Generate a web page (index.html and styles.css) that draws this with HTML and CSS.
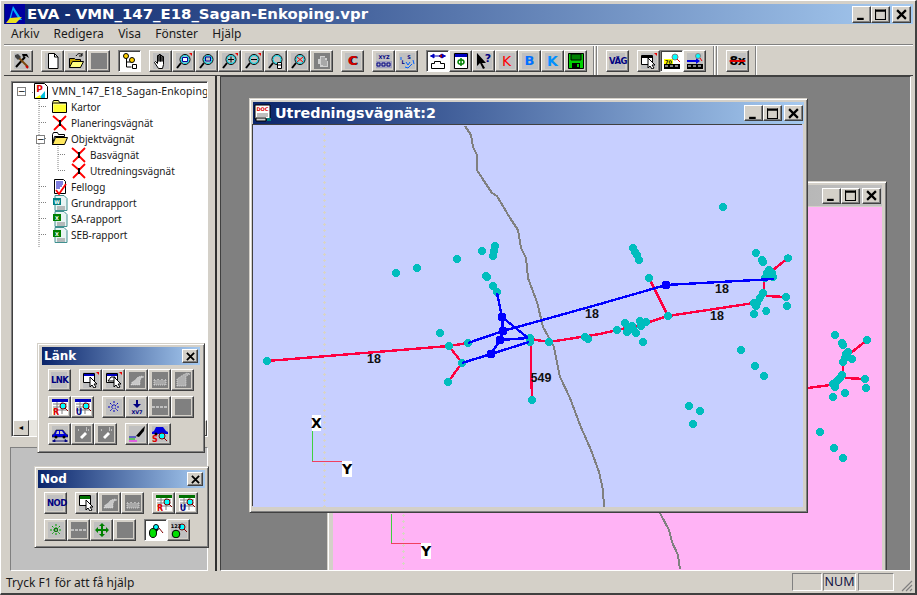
FILE: index.html
```html
<!DOCTYPE html>
<html lang="sv">
<head>
<meta charset="utf-8">
<title>EVA</title>
<link rel="stylesheet" href="styles.css">
</head>
<body>
<svg class="defs" aria-hidden="true">
  <symbol id="tools" viewBox="0 0 16 16"><path d="M2 14 11 4" stroke="#000" stroke-width="2"/><path d="M14 14 5 5" stroke="#7a4a10" stroke-width="2"/><path d="M8 1h5l2 4-3-2-3 1z" fill="#000"/><path d="M1 2l3-1 3 3-3 3-3-3z" fill="#404040"/><path d="M12 13l2 2" stroke="#c00" stroke-width="2"/></symbol>
  <symbol id="new" viewBox="0 0 16 16"><path d="M3.500 .5h6l3.500 3.500v11.500h-9.500z" fill="#fff" stroke="#000"/><path d="M9.500 .5v3.500h3.500" fill="none" stroke="#000"/></symbol>
  <symbol id="open" viewBox="0 0 16 16"><path d="M1.500 5.500h5l1 1h5v8h-11z" fill="#c0a000" stroke="#000"/><path d="M1.500 14.500l3-6h11l-3 6z" fill="#ffff80" stroke="#000"/><path d="M8 3c2-3 4-3 6-1M14 0v3h-3" fill="none" stroke="#000"/></symbol>
  <symbol id="treei" viewBox="0 0 16 16"><path d="M4.500 4v10h5M4.500 9h5" fill="none" stroke="#000"/><circle cx="4" cy="3" r="2.500" fill="#ffd000" stroke="#000"/><circle cx="10" cy="7" r="2.500" fill="#ffd000" stroke="#000"/><path d="M10.500 11.500h4v4h-4z" fill="#fff" stroke="#000"/></symbol>
  <symbol id="hand" viewBox="0 0 16 16"><path d="M5.500 15.500l-4-6 1-1 2 2v-8h1.500v6-7h1.500v7-6h1.500v6-5h1.500v8l-1 4z" fill="#fff" stroke="#000" stroke-linejoin="round"/></symbol>
  <symbol id="mag" viewBox="0 0 16 16"><path d="M1 15l4-5" stroke="#000" stroke-width="2"/><circle cx="9" cy="6.500" r="5" fill="#c0c0c0" stroke="#000"/><circle cx="9" cy="6.500" r="4" fill="none" stroke="#00d8e8"/></symbol>
  <symbol id="magw" viewBox="0 0 16 16"><use href="#mag"/><path d="M6.500 4.500h5v4h-5z" fill="#fff" stroke="#0000a0"/><path d="M13 0h3v3z" fill="#e00"/></symbol>
  <symbol id="magr" viewBox="0 0 16 16"><use href="#mag"/><path d="M6.500 4h5v4h-5z" fill="none" stroke="#0000a0"/></symbol>
  <symbol id="magp" viewBox="0 0 16 16"><use href="#mag"/><path d="M6 6.500h6M9 3.500v6" stroke="#000"/><path d="M13 0h3v3z" fill="#e00"/></symbol>
  <symbol id="magm" viewBox="0 0 16 16"><use href="#mag"/><path d="M6 6.500h6" stroke="#000"/><path d="M13 0h3v3z" fill="#e00"/></symbol>
  <symbol id="magc" viewBox="0 0 16 16"><use href="#mag"/><path d="M9.500 9.500h4v6h-4z" fill="#fff" stroke="#000"/><path d="M9.500 12h4" stroke="#000"/></symbol>
  <symbol id="magx" viewBox="0 0 16 16"><use href="#mag"/><path d="M6 4l6 5M12 4l-6 5" stroke="#e00"/></symbol>
  <symbol id="magd" viewBox="0 0 16 16"><rect width="16" height="16" fill="#808080"/><path d="M6 3h5v2h2v3h1v6h-8v-3h-2v-5h2z" fill="#d0d0d0"/><path d="M8 4v8M10 4v9M12 7v6" stroke="#808080"/></symbol>
  <symbol id="xyz" viewBox="0 0 16 16"><path d="M0 8h16v7H0z" fill="#a0a0c0"/><path d="M1 10h3v3H1zM6 10h3v3H6zM11 10h3v3h-3z" fill="#c0c0c0" stroke="#000080"/></symbol>
  <symbol id="lks" viewBox="0 0 16 16"><path d="M2 4v3M6 14l3 1 4-4M14 7l1 4" stroke="#0060ff" fill="none"/><path d="M7 9l2 3 2-3" fill="none" stroke="#0060ff"/></symbol>
  <symbol id="links" viewBox="0 0 16 16"><path d="M0 3h16M1 3l3-2v4zM15 3l-3-2v4zM9 3l3-2v4z" stroke="#0000c0" fill="#0000c0"/><path d="M9 3l3-2v4z" fill="#a00000"/><path d="M1.500 15.500v-5h3v-2h6v2h4v5z" fill="#fff" stroke="#000"/></symbol>
  <symbol id="panel" viewBox="0 0 16 16"><path d="M1.500 .5h13v15h-13z" fill="#fff" stroke="#000"/><path d="M2 1h12v3H2z" fill="#0000c0"/><path d="M8 5v8M5 9c0-3 6-3 6 0s-6 3-6 0" fill="none" stroke="#008000" stroke-width="1.500"/></symbol>
  <symbol id="helpi" viewBox="0 0 16 16"><path d="M1 0v13l3-3 3 6 2-1-3-5h4z" fill="#000"/></symbol>
  <symbol id="save" viewBox="0 0 16 16"><path d="M.5.500h15v15H.500z" fill="#00d000" stroke="#000"/><path d="M3 1h10v6H3z" fill="#008000" stroke="#000"/><path d="M4 10h8v5H4z" fill="#000"/><path d="M9 11h2v3H9z" fill="#00d000"/></symbol>
  <symbol id="wincur" viewBox="0 0 16 16"><path d="M.5 2.500h11v9H.500z" fill="#fff" stroke="#000"/><path d="M1 3h10v2H1z" fill="#000"/><path d="M7 5v10l2-2 2 3 2-1-2-3h3z" fill="#fff" stroke="#000"/><path d="M13 0h3v3z" fill="#e00"/></symbol>
  <symbol id="road70" viewBox="0 0 16 16"><path d="M0 6h9v5H0z" fill="#ffff00"/><path d="M0 11h16v5H0z" fill="#000"/><path d="M1 13h3M6 13h3M11 13h3" stroke="#fff"/><circle cx="11" cy="4" r="3" fill="#00ffff" stroke="#808080"/><path d="M13 6l3 3" stroke="#e00"/></symbol>
  <symbol id="roadar" viewBox="0 0 16 16"><path d="M0 11h16v5H0z" fill="#000"/><path d="M1 13h3M6 13h3M11 13h3" stroke="#fff"/><path d="M0 8h10" stroke="#0000e0" stroke-width="2"/><path d="M9 5l4 3-4 3z" fill="#0000e0"/><circle cx="11" cy="3" r="2.500" fill="#00ffff" stroke="#808080"/><path d="M13 5l2 3" stroke="#e00"/></symbol>
  <symbol id="disa" viewBox="0 0 16 16"><rect width="16" height="16" fill="#808080"/><path d="M2 13l1-3 2-1 2-2 2-2 4-1 2 1-3 1-1 3v4z" fill="#c8c8c8" stroke="#fff" stroke-width=".5" stroke-dasharray="1 1"/></symbol>
  <symbol id="disb" viewBox="0 0 16 16"><rect width="16" height="16" fill="#808080"/><path d="M2 13V7l2 2 2-2 2 2 2-2 2 2 2-2v6z" fill="#a8a8a8" stroke="#fff" stroke-width=".6" stroke-dasharray="1 1"/></symbol>
  <symbol id="disc" viewBox="0 0 16 16"><rect width="16" height="16" fill="#808080"/><path d="M2 14V7l3-2 3-2 4-2 3 1-4 2v10z" fill="#b0b0b0" stroke="#fff" stroke-width=".6" stroke-dasharray="1 1"/></symbol>
  <symbol id="dash" viewBox="0 0 16 16"><rect width="16" height="16" fill="#808080"/><path d="M0 8h16" stroke="#fff" stroke-dasharray="3 1"/></symbol>
  <symbol id="gray" viewBox="0 0 16 16"><rect width="16" height="16" fill="#808080"/></symbol>
  <symbol id="winc" viewBox="0 0 16 16"><path d="M.5 1.500h11v9H.500z" fill="#fff" stroke="#000"/><path d="M1 2h10v2H1z" fill="#0000c0"/><path d="M7 5v10l2-2 2 3 2-1-2-3h3z" fill="#fff" stroke="#000"/><path d="M13 0h3v3z" fill="#e00"/></symbol>
  <symbol id="wina" viewBox="0 0 16 16"><path d="M.5 1.500h11v9H.500z" fill="#fff" stroke="#000"/><path d="M1 2h10v2H1z" fill="#0000c0"/><path d="M2 9l3-4h4v4z" fill="none" stroke="#000"/><path d="M8 5v10l2-2 2 3 2-1-2-3h3z" fill="#fff" stroke="#000"/><path d="M13 0h3v3z" fill="#e00"/></symbol>
  <symbol id="wing" viewBox="0 0 16 16"><path d="M.5 .5h11v10H.500z" fill="#fff" stroke="#000"/><path d="M1 1h10v3H1z" fill="#007000"/><path d="M7 5v10l2-2 2 3 2-1-2-3h3z" fill="#fff" stroke="#000"/></symbol>
  <symbol id="tabb" viewBox="0 0 16 16"><path d="M0 0h16v16H0z" fill="#fff"/><path d="M0 0h16v3H0z" fill="#0000c0"/><path d="M1 5h14M1 8h14M1 11h14M5 3v12M10 3v12" stroke="#808080"/><circle cx="11" cy="7" r="3" fill="#00ffff" stroke="#800000"/><path d="M13 9l3 3" stroke="#800000"/></symbol>
  <symbol id="tabg" viewBox="0 0 16 16"><path d="M0 0h16v16H0z" fill="#fff"/><path d="M0 0h16v3H0z" fill="#007000"/><path d="M1 5h14M1 8h14M1 11h14M5 3v12M10 3v12" stroke="#808080"/><circle cx="11" cy="7" r="3" fill="#00ffff" stroke="#800000"/><path d="M13 9l3 3" stroke="#800000"/></symbol>
  <symbol id="star" viewBox="0 0 16 16"><path d="M8 2v12M2 8h12M4 4l8 8M12 4l-8 8" stroke="#0000c0" stroke-dasharray="2 1"/><circle cx="8" cy="8" r="1.500" fill="#c0c0c0"/></symbol>
  <symbol id="starg" viewBox="0 0 16 16"><path d="M8 2v12M2 8h12M4 4l8 8M12 4l-8 8" stroke="#00a000" stroke-dasharray="2 1"/><circle cx="8" cy="8" r="1.500" fill="#c0c0c0" stroke="#006000"/></symbol>
  <symbol id="xv7" viewBox="0 0 16 16"><path d="M7 1h2v4h3l-4 4-4-4h3z" fill="#000080"/></symbol>
  <symbol id="car" viewBox="0 0 16 16"><path d="M0 9l2-1 2-4h7l3 4 2 1v2H0z" fill="#0000e0" stroke="#000" stroke-width=".5"/><path d="M5 5h2v3H4zM8 5h2l2 3H8z" fill="#c0c0c0"/><circle cx="4" cy="11" r="1.500"/><circle cx="12" cy="11" r="1.500"/><path d="M0 15h16M1 15l2-1.500v3zM15 15l-2-1.500v3z" stroke="#000080" fill="#000080" stroke-width=".8"/></symbol>
  <symbol id="dis2" viewBox="0 0 16 16"><rect width="16" height="16" fill="#808080"/><path d="M5 11l5-5 2 2-5 5z" fill="#fff"/><path d="M3 4h2M11 2h2M11 4h3" stroke="#fff" stroke-dasharray="1 1"/></symbol>
  <symbol id="pen" viewBox="0 0 16 16"><path d="M7 10L13 3l3-3-1 5-5 6z" fill="#000"/><path d="M0 11h7" stroke="#0000c0"/><path d="M0 13h6" stroke="#00c000"/><path d="M0 15h8" stroke="#ff00ff"/></symbol>
  <symbol id="carq" viewBox="0 0 16 16"><path d="M0 6l2-1 2-4h7l3 4 2 1v2H0z" fill="#0000e0"/><circle cx="4" cy="8" r="1.500"/><circle cx="10" cy="10" r="3" fill="#00ffff" stroke="#800000"/><path d="M12 12l3 3" stroke="#800000"/></symbol>
  <symbol id="move" viewBox="0 0 16 16"><path d="M8 1l3 3H9v3h3V5l3 3-3 3V9H9v3h2l-3 3-3-3h2V9H4v2L1 8l3-3v2h3V4H5z" fill="#008000"/></symbol>
  <symbol id="ovals" viewBox="0 0 16 16"><rect width="16" height="16" fill="#fff"/><path d="M2 12l6-7 3 2-6 7z" fill="#000"/><ellipse cx="5" cy="11" rx="3.500" ry="4.500" fill="#00e000" stroke="#000"/><circle cx="8" cy="5" r="2.500" fill="#00ffff" stroke="#000"/><path d="M11 6l4 5" stroke="#800000"/></symbol>
  <symbol id="num123" viewBox="0 0 16 16"><circle cx="5" cy="12" r="3.800" fill="#00e000" stroke="#000"/><circle cx="11" cy="5" r="3" fill="#00ffff" stroke="#800000"/><path d="M13 7l3 3" stroke="#800000"/></symbol>
  <symbol id="proj" viewBox="0 0 16 16"><path d="M1.500 .5h10l3 3v12h-13z" fill="#fff" stroke="#000"/><path d="M6 15l6-7v7z" fill="#00c0e0"/><path d="M2 15l5-3 1 3z" fill="#ffff00"/></symbol>
  <symbol id="fclosed" viewBox="0 0 16 16"><path d="M.5 3.500l1-2h5l1 2h7v10H.500z" fill="#ffff80" stroke="#000"/><path d="M1 4h13" stroke="#000"/><path d="M2 6h12v7H2z" fill="#ffff00" opacity=".6"/></symbol>
  <symbol id="fopen" viewBox="0 0 16 16"><path d="M.5 3.500l1-2h4l1 2h6v2h-10l-2 8z" fill="#fff" stroke="#000"/><path d="M.5 13.500l3-7h12l-3 7z" fill="#ffe860" stroke="#000"/></symbol>
  <symbol id="redx" viewBox="0 0 16 16"><path d="M1 1l7 6M14 1L8 7M8 9l-6 6M8 9l6 6" fill="none" stroke="#f00" stroke-width="1.800"/><path d="M8 5v6" stroke="#000" stroke-width="2"/></symbol>
  <symbol id="flog" viewBox="0 0 16 16"><path d="M2.500 .5h9l2 2v12h-11z" fill="#fff" stroke="#000"/><path d="M4 3h7M4 5h7M4 7h6M4 9h4" stroke="#0000c0"/><path d="M4 11l3 4 7-10" fill="none" stroke="#f00" stroke-width="1.800"/></symbol>
  <symbol id="doc1" viewBox="0 0 16 16"><path d="M3 .5h9l3 3v12H3z" fill="#e8f4f4" stroke="#409090"/><path d="M1 3h8v7H1z" fill="#008080"/><path d="M5 12h8M5 14h8" stroke="#808080"/></symbol>
  <symbol id="doc2" viewBox="0 0 16 16"><path d="M3 .5h9l3 3v12H3z" fill="#e8f4f4" stroke="#409090"/><path d="M1 3h8v7H1z" fill="#008000"/><path d="M5 12h8M5 14h8" stroke="#808080"/></symbol>
  <symbol id="logo" viewBox="0 0 20 20"><rect width="20" height="20" fill="#0000a0"/><path d="M8 2l9 14H4z" fill="#00b0ff"/><path d="M8 6l5 8H6z" fill="#0000c0"/><path d="M1 19l4-5 12-1-6 6z" fill="#e8e020"/></symbol>
  <symbol id="docw" viewBox="0 0 18 18"><path d="M1 1h15v14H1z" fill="#fff" stroke="#000"/><path d="M3 10h11M3 12h11" stroke="#808080"/><path d="M2 14h10v3H2z" fill="#d0d0d0" stroke="#000"/><path d="M13 14h4v3h-4z" fill="#008080"/></symbol>
  <symbol id="min" viewBox="0 0 10 10"><path d="M1 8h6v2H1z"/></symbol>
  <symbol id="max" viewBox="0 0 10 10"><path d="M.5 1.500h9v8h-9zM0 0h10v2H0z" fill="none" stroke="#000"/></symbol>
  <symbol id="cls" viewBox="0 0 10 10"><path d="M1 1l8 8M9 1l-8 8" stroke="#000" stroke-width="2"/></symbol>
</svg>

<div class="app">
  <header class="titlebar">
    <svg class="title-logo"><use href="#logo"/></svg>
    <span class="title-text">EVA - VMN_147_E18_Sagan-Enkoping.vpr</span>
    <span class="ctrls main-ctrls">
      <button class="ctl"><svg><use href="#min"/></svg></button><button class="ctl"><svg><use href="#max"/></svg></button><button class="ctl gap"><svg><use href="#cls"/></svg></button>
    </span>
  </header>
  <nav class="menubar"><span>Arkiv</span><span>Redigera</span><span>Visa</span><span>Fönster</span><span>Hjälp</span></nav>
  <div class="toolbar">
    <button class="b"><svg><use href="#tools"/></svg></button>
    <i class="s"></i>
    <button class="b"><svg><use href="#new"/></svg></button><button class="b"><svg><use href="#open"/></svg></button><button class="b"><svg><use href="#gray"/></svg></button>
    <i class="s"></i>
    <button class="b on"><svg><use href="#treei"/></svg></button>
    <i class="s"></i>
    <button class="b"><svg><use href="#hand"/></svg></button><button class="b"><svg><use href="#magw"/></svg></button><button class="b"><svg><use href="#magr"/></svg></button><button class="b"><svg><use href="#magp"/></svg></button><button class="b"><svg><use href="#magm"/></svg></button><button class="b"><svg><use href="#magc"/></svg></button><button class="b"><svg><use href="#magx"/></svg></button><button class="b"><svg><use href="#magd"/></svg></button>
    <i class="s"></i>
    <button class="b"><span class="glyph c">C</span></button>
    <i class="s"></i>
    <button class="b"><svg><use href="#xyz"/><text x="8" y="6" class="nano navy">XYZ</text></svg></button><button class="b"><svg><use href="#lks"/><text x="4" y="11" class="nano navy">L</text><text x="10" y="6" class="nano navy">S</text></svg></button>
    <i class="s"></i>
    <button class="b on"><svg><use href="#links"/></svg></button><button class="b"><svg><use href="#panel"/></svg></button><button class="b"><svg><use href="#helpi"/><text x="12" y="9" class="help navy">?</text></svg></button><button class="b"><span class="glyph kr">K</span></button><button class="b"><span class="glyph kb">B</span></button><button class="b"><span class="glyph kk">K</span></button><button class="b"><svg><use href="#save"/></svg></button>
    <i class="grip g1"></i>
    <button class="b"><span class="glyph vag">VÄG</span></button>
    <i class="s"></i>
    <button class="b"><svg><use href="#wincur"/></svg></button><button class="b on"><svg><use href="#road70"/><text x="4.500" y="10.500" class="nano">70</text></svg></button><button class="b"><svg><use href="#roadar"/></svg></button>
    <i class="grip g2"></i>
    <button class="b"><span class="glyph eight">8x</span></button>
    <i class="grip g3"></i>
  </div>

  <main class="workspace">
    <aside class="sidebar">
      <div class="tree">
        <svg class="tree-lines"><path d="M20 10.500h4M27 14v152M27 24.500h8M27 40.500h8M27 56.500h8M27 104.500h8M27 120.500h8M27 136.500h8M27 152.500h8M46 62v26M46 72.500h8M46 88.500h8" fill="none" stroke="#808080" stroke-dasharray="1 1"/></svg>
        <div class="row r0"><i class="pm">−</i><svg><use href="#proj"/><text x="6.500" y="9" class="tiny red">P</text></svg><span>VMN_147_E18_Sagan-Enkoping</span></div>
        <div class="row r1"><svg><use href="#fclosed"/></svg><span>Kartor</span></div>
        <div class="row r1"><svg><use href="#redx"/></svg><span>Planeringsvägnät</span></div>
        <div class="row r1"><i class="pm">−</i><svg><use href="#fopen"/></svg><span>Objektvägnät</span></div>
        <div class="row r2"><svg><use href="#redx"/></svg><span>Basvägnät</span></div>
        <div class="row r2"><svg><use href="#redx"/></svg><span>Utredningsvägnät</span></div>
        <div class="row r1"><svg><use href="#flog"/></svg><span>Fellogg</span></div>
        <div class="row r1"><svg><use href="#doc1"/><text x="5" y="8.500" class="nano white">W</text></svg><span>Grundrapport</span></div>
        <div class="row r1"><svg><use href="#doc2"/><text x="5" y="8.500" class="nano white">X</text></svg><span>SA-rapport</span></div>
        <div class="row r1"><svg><use href="#doc2"/><text x="5" y="8.500" class="nano white">X</text></svg><span>SEB-rapport</span></div>
        <div class="hscroll"><button class="arrow">◄</button><span class="track"></span><button class="arrow">►</button></div>
      </div>
      <div class="lower"></div>
    </aside>

    <section class="mdi">
      <article class="win win-back">
        <div class="wtitle inactive">
          <span class="ctrls"><button class="ctl"><svg><use href="#min"/></svg></button><button class="ctl"><svg><use href="#max"/></svg></button><button class="ctl gap"><svg><use href="#cls"/></svg></button></span>
        </div>
        <svg class="map pink" viewBox="333 207 549 400">
          <path d="M660 513l9 17 3 12 6 13 2 14" class="road"/>
          <path d="M403 514v55" class="cross-v"/><path d="M403 514v55" class="cross-h"/>
          <path d="M808 388l22-3M845 378l20 1M843 363v12M852 352l15-12M832 388l6-8" class="red"/>
          <path d="M835 335h0M842 343h0M843 345h0M867 340h0M848 352h0M846 354h0M845 358h0M843 362h0M852 359h0M842 375h0M840 378h0M838 380h0M836 382h0M833 384h0M835 387h0M865 379h0M866 388h0M845 393h0M833 397h0M820 432h0M834 448h0M843 458h0" class="dots"/>
          <path d="M391.500 514v29" class="axis-g"/><path d="M391 543.500h30" class="axis-r"/>
          <rect x="421" y="543" width="10" height="16" fill="#fff"/><text x="426" y="556" class="axis-t">Y</text>
        </svg>
      </article>

      <article class="win win-front">
        <div class="wtitle">
          <svg class="doc-ic"><use href="#docw"/><text x="8.500" y="7" class="nano red">DOC</text></svg>
          <span class="wtext">Utredningsvägnät:2</span>
          <span class="ctrls"><button class="ctl"><svg><use href="#min"/></svg></button><button class="ctl"><svg><use href="#max"/></svg></button><button class="ctl gap"><svg><use href="#cls"/></svg></button></span>
        </div>
        <svg class="map blue" viewBox="253 125 550 382">
          <path d="M465 126l6 9 2 12 4 8v15l5 8 10 15 5 3 13 22 8 12 3 18 5 10 2 20 9 24 6 25 11 20 6 30 10 21 10 27 11 25 8 22 4 18 1 17" class="road"/>
          <path d="M324 127v380" class="cross-v"/><path d="M324 127v380" class="cross-h"/>
          <path d="M267 361l182-15 19-3M530 339l19 3 51-8 17-4 23-5 28-9 86-13M449 346l13 17-14 19M531 341v21l1 38M764 278v15M766 296l20 1M773 270l15-12" class="red"/>
          <path d="M649 278l19 38" class="red thin"/>
          <path d="M495 246h0M494 251h0M493 256h0M482 251h0M457 259h0M417 268h0M396 273h0M486 276h0M487 277h0M493 286h0M497 292h0M440 333h0M267 361h0M449 346h0M468 343h0M462 363h0M448 382h0M530 338h0M530 342h0M549 342h0M585 337h0M588 339h0M532 400h0M723 207h0M633 248h0M635 252h0M637 255h0M639 260h0M649 278h0M668 316h0M617 330h0M625 323h0M627 332h0M628 328h0M632 326h0M633 329h0M636 333h0M640 321h0M641 326h0M646 322h0M643 342h0M756 253h0M762 260h0M763 262h0M788 258h0M769 270h0M767 273h0M765 278h0M773 277h0M772 273h0M763 293h0M760 298h0M757 303h0M754 303h0M756 306h0M786 297h0M787 306h0M754 314h0M766 311h0M741 350h0M755 366h0M764 376h0M689 406h0M700 411h0M693 424h0" class="dots"/>
          <path d="M497 293l5 24 1 14M502 317l26 21M468 343l35-12 97-27 66-19 108-6M500 340l28-2M500 340l3-9M462 363l29-9 38-12M491 354l9-14" class="blu"/>
          <path d="M502 317h0M503 331h0M500 340h0M491 354h0M666 285h0" class="bigdots"/>
          <text x="374" y="363" class="lbl">18</text>
          <text x="541" y="382" class="lbl">549</text>
          <text x="592" y="318" class="lbl">18</text>
          <text x="722" y="293" class="lbl">18</text>
          <text x="717" y="320" class="lbl">18</text>
          <path d="M312.500 431v30" class="axis-g"/><path d="M312 461.500h30" class="axis-r"/>
          <rect x="312" y="415" width="9" height="16" fill="#fff"/><text x="316.500" y="428" class="axis-t">X</text>
          <rect x="342" y="461" width="10" height="16" fill="#fff"/><text x="347" y="474" class="axis-t">Y</text>
        </svg>
      </article>
    </section>

    <div class="palette p-lank">
      <div class="ptitle"><span>Länk</span><button class="ctl small"><svg><use href="#cls"/></svg></button></div>
      <div class="prow first">
        <button class="b"><span class="glyph lnk">LNK</span></button><i class="s"></i><button class="b"><svg><use href="#winc"/></svg></button><button class="b"><svg><use href="#wina"/></svg></button><button class="b"><svg><use href="#disa"/></svg></button><button class="b"><svg><use href="#disb"/></svg></button><button class="b"><svg><use href="#disc"/></svg></button>
      </div>
      <div class="prow">
        <button class="b"><svg><use href="#tabb"/><text x="4" y="15.500" class="micro red">R</text></svg></button><button class="b"><svg><use href="#tabb"/><text x="4" y="15.500" class="micro navy">U</text></svg></button><i class="s"></i><button class="b"><svg><use href="#star"/></svg></button><button class="b"><svg><use href="#xv7"/><text x="8" y="15" class="nano navy">XV7</text></svg></button><button class="b"><svg><use href="#dash"/></svg></button><button class="b"><svg><use href="#gray"/></svg></button>
      </div>
      <div class="prow">
        <button class="b"><svg><use href="#car"/></svg></button><button class="b"><svg><use href="#dis2"/></svg></button><button class="b"><svg><use href="#dis2"/></svg></button><i class="s"></i><button class="b"><svg><use href="#pen"/></svg></button><button class="b"><svg><use href="#carq"/><text x="3" y="15.500" class="micro red">S</text></svg></button>
      </div>
    </div>

    <div class="palette p-nod">
      <div class="ptitle"><span>Nod</span><button class="ctl small"><svg><use href="#cls"/></svg></button></div>
      <div class="prow first">
        <button class="b"><span class="glyph lnk">NOD</span></button><i class="s"></i><button class="b"><svg><use href="#wing"/></svg></button><button class="b"><svg><use href="#disa"/></svg></button><button class="b"><svg><use href="#disb"/></svg></button><i class="s"></i><button class="b"><svg><use href="#tabg"/><text x="4" y="15.500" class="micro red">R</text></svg></button><button class="b"><svg><use href="#tabg"/><text x="4" y="15.500" class="micro navy">U</text></svg></button>
      </div>
      <div class="prow">
        <button class="b"><svg><use href="#starg"/></svg></button><button class="b"><svg><use href="#dash"/></svg></button><button class="b"><svg><use href="#move"/></svg></button><button class="b"><svg><use href="#gray"/></svg></button><i class="s"></i><button class="b on"><svg><use href="#ovals"/></svg></button><button class="b"><svg><use href="#num123"/><text x="5" y="6" class="nano">123</text></svg></button>
      </div>
    </div>
  </main>

  <footer class="statusbar">
    <span class="msg">Tryck F1 för att få hjälp</span>
    <span class="pane p1"></span><span class="pane p2">NUM</span><span class="pane p3"></span>
    <svg class="sizegrip" viewBox="0 0 12 12"><path d="M11 1L1 11M11 5l-6 6M11 9l-2 2" stroke="#808080" stroke-width="1.200"/></svg>
  </footer>
</div>
</body>
</html>
```

FILE: styles.css
```css
* { box-sizing: border-box; }
html, body { margin: 0; padding: 0; width: 917px; height: 595px; overflow: hidden; background: #d4d0c8; }
body { font-family: "Noto Sans", "Liberation Sans", sans-serif; color: #000; }
.defs { position: absolute; width: 0; height: 0; }
button { padding: 0; margin: 0; font: inherit; }

.nano { font: bold 5px "DejaVu Sans", sans-serif; text-anchor: middle; }
.micro { font: bold 8px "DejaVu Sans", sans-serif; text-anchor: middle; }
.tiny { font: bold 9px "DejaVu Sans", sans-serif; text-anchor: middle; }
.help { font: bold 11px "DejaVu Sans", sans-serif; text-anchor: middle; }
.navy { fill: #000080; }
.red { fill: #e00000; }
.white { fill: #fff; }

.app {
  width: 917px; height: 595px; display: flex; flex-direction: column; position: relative;
  border-style: solid; border-width: 1px 2px 2px 1px;
  border-color: #fff #404040 #404040 #fff;
  padding: 3px 2px 0 3px;
}

.titlebar {
  height: 20px; flex: none; display: flex; align-items: center; padding-left: 1px;
  background: linear-gradient(90deg, #0a246a, #a6caf0);
}
.title-logo { width: 20px; height: 20px; flex: none; }
.title-text { font: bold 14.900px "DejaVu Sans", sans-serif; color: #fff; margin-left: 2px; white-space: nowrap; }
.ctrls { margin-left: auto; display: flex; }
.main-ctrls { margin-right: 2px; }
.ctl {
  width: 19px; height: 17px; display: flex; align-items: center; justify-content: center;
  background: #d4d0c8; border: 1px solid; border-color: #fff #404040 #404040 #fff;
  box-shadow: inset -1px -1px 0 #808080;
}
.ctl.gap { margin-left: 2px; }
.ctl svg { width: 11px; height: 11px; }

.menubar {
  height: 21px; flex: none; display: flex; align-items: center; padding: 0 0 2px 7px; gap: 14.300px;
  font-size: 12px; color: #1a1a1a;
  border-bottom: 1px solid #808080;
}
.toolbar {
  height: 30px; flex: none; display: flex; align-items: flex-start; padding: 4px 0 0 6px;
  border-top: 1px solid #fff;
}
.s { width: 8px; flex: none; }
.b {
  width: 23px; height: 22px; flex: none; display: flex; align-items: center; justify-content: center;
  background: #d4d0c8; border: 1px solid; border-color: #fff #404040 #404040 #fff;
  box-shadow: inset -1px -1px 0 #808080, inset 1px 1px 0 #d4d0c8;
}
.b > svg, .glyph { width: 16px; height: 16px; background: #c0c0c0; display: block; }
.b.on { border-color: #808080 #fff #fff #808080; background: #fff; box-shadow: inset 1px 1px 0 #404040; }
.b.on > svg { background: #fff; }
.glyph {
  font: bold 12px/16px "DejaVu Sans", sans-serif; text-align: center; white-space: nowrap;
}
.c { color: #d00000; font-size: 13px; text-shadow: 1px 0 #000; }
.kr { color: #ff0000; font-weight: 400; font-size: 14px; }
.kb { color: #0070ff; font-size: 13px; }
.kk { color: #0090ff; font-size: 14px; }
.vag, .lnk { color: #000080; font-size: 8.500px; letter-spacing: -.6px; margin-left: -1px; }
.eight { color: #000; font-size: 12.500px; text-decoration: line-through #e00000 2px; letter-spacing: -.5px; }
.grip { width: 5px; height: 30px; flex: none; border-left: 1px solid #808080; border-right: 1px solid #fff; box-shadow: inset 1px 0 0 #fff, inset -1px 0 0 #808080; }
.g1 { margin: -4px 8px 0 6px; }
.g2 { margin: -4px 8px 0 7px; }
.g3 { margin: -4px 0 0 6px; width: 2px; box-shadow: none; }

.workspace { flex: 1; display: flex; min-height: 0; border-top: 1px solid #404040; position: relative; }
.sidebar { width: 213px; flex: none; padding: 5px 0 0 7px; border-right: 2px solid #303030; display: flex; flex-direction: column; }
.tree {
  width: 197px; height: 356px; flex: none; position: relative; background: #fff;
  border: 1px solid; border-color: #808080 #fff #fff #808080; padding: 1px 0 0 0;
  box-shadow: inset 1px 1px 0 #404040; overflow: hidden;
  font-size: 10px;
}
.tree-lines { position: absolute; left: 0; top: 0; width: 100px; height: 200px; }
.row { height: 16px; display: flex; align-items: center; position: relative; white-space: nowrap; color: #1a1a1a; }
.row svg { width: 16px; height: 16px; flex: none; }
.row span { margin-left: 3px; }
.r0 span { font-size: 10.500px; letter-spacing: .1px; }
.r0 { padding-left: 21px; }
.r1 { padding-left: 40px; }
.r2 { padding-left: 59px; }
.pm {
  position: absolute; width: 9px; height: 9px; top: 4px; background: #fff; border: 1px solid #808080;
  font: 9px/7px "DejaVu Sans", sans-serif; text-align: center; color: #000;
}
.r0 .pm { left: 5px; }
.r1 .pm { left: 24px; }
.hscroll { position: absolute; left: 1px; right: 0; top: 338px; height: 16px; display: flex; background: #e8e6e0; }
.arrow { width: 16px; height: 16px; flex: none; font-size: 7px; line-height: 12px; background: #d4d0c8; border: 1px solid; border-color: #fff #404040 #404040 #fff; }
.track { flex: 1; }
.lower {
  width: 198px; flex: 1; margin-top: 10px; margin-left: -1px; background: #c0c0c0;
  border: 1px solid; border-color: #808080 #fff #fff #808080;
}

.mdi {
  flex: 1; position: relative; overflow: hidden; margin-left: 3px; margin-right: 2px; background: #808080;
  border-left: 1px solid #404040; border-top: 1px solid #404040; border-right: 1px solid #fff; border-bottom: 1px solid #fff;
}
.win { position: absolute; background: #d4d0c8; border: 1px solid; border-color: #d4d0c8 #404040 #404040 #d4d0c8; box-shadow: inset 1px 1px 0 #fff, inset -1px -1px 0 #808080; padding: 3px; display: flex; flex-direction: column; }
.win-back { left: 106px; top: 104px; width: 560px; height: 440px; padding-left: 5px; padding-right: 4px; }
.win-front { left: 28px; top: 21px; width: 559px; height: 415px; }
.wtitle {
  height: 22px; flex: none; display: flex; align-items: center; padding-left: 1px;
  background: linear-gradient(90deg, #0a246a, #a6caf0); margin-bottom: 1px;
}
.wtitle.inactive { background: linear-gradient(90deg, #808080, #c0c0c0); height: 21px; }
.wtitle .ctl { height: 16px; }
.wtitle .ctrls { margin-right: 1px; }
.doc-ic { width: 18px; height: 18px; flex: none; }
.wtext { font: bold 14.300px "DejaVu Sans", sans-serif; color: #fff; margin-left: 3px; white-space: nowrap; }
.map { display: block; flex: none; shape-rendering: crispEdges; }
.map.pink { width: 549px; height: 400px; background: #ffb3f5; }
.map.blue { width: 550px; height: 382px; background: #c7cfff; box-shadow: -1px -1px 0 #404040; }
.map path { fill: none; }
.road { stroke: #808080; stroke-width: 2; stroke-linejoin: round; }
.map .red { stroke: #ff0040; stroke-width: 2.400; }
.map .blu { stroke: #0000ff; stroke-width: 2.400; }
.map .dots { stroke: #00bdbd; stroke-width: 7.500; stroke-linecap: round; }
.map .bigdots { stroke: #0000ff; stroke-width: 9; stroke-linecap: round; }
.map .cross-v { stroke: #d8d4c4; stroke-width: 1; stroke-dasharray: 3 3; }
.map .cross-h { stroke: #d8d4c4; stroke-width: 3; stroke-dasharray: 1 5; stroke-dashoffset: -1; }
.map .axis-g { stroke: #40d040; stroke-width: 1; }
.map .axis-r { stroke: #f04060; stroke-width: 1; }
.axis-t { font: 700 14px "DejaVu Sans", sans-serif; text-anchor: middle; fill: #000; }
.lbl { font: bold 12.500px "Liberation Sans", sans-serif; text-anchor: middle; fill: #101010; }

.palette {
  position: absolute; background: #d4d0c8; border: 1px solid; border-color: #d4d0c8 #404040 #404040 #d4d0c8;
  box-shadow: inset 1px 1px 0 #fff, inset -1px -1px 0 #808080; padding: 3px 4px;
}
.p-lank { left: 33px; top: 267px; width: 168px; height: 110px; }
.p-nod { left: 30px; top: 390px; width: 175px; height: 82px; padding: 3px; }
.ptitle {
  height: 18px; display: flex; align-items: center; justify-content: space-between; padding: 0 2px 0 2px;
  background: linear-gradient(90deg, #0a246a, #a6caf0);
  color: #fff; font: bold 12px "DejaVu Sans", sans-serif;
}
.ctl.small { width: 16px; height: 14px; }
.ctl.small svg { width: 9px; height: 9px; }
.prow { display: flex; margin-top: 5px; padding-left: 6px; }
.prow.first { margin-top: 4px; }

.statusbar {
  height: 22px; flex: none; display: flex; align-items: center; position: relative; font-size: 12px; color: #1a1a1a;
  padding: 0 0 0 2px;
}
.msg { width: 786px; flex: none; }
.pane { height: 18px; border: 1px solid; border-color: #808080 #fff #fff #808080; text-align: center; line-height: 16px; font-size: 12.500px; flex: none; }
.p1 { width: 30px; }
.p2 { width: 33px; margin-left: 1px; color: #101040; }
.p3 { width: 36px; margin-left: 2px; }
.sizegrip { position: absolute; right: 0; bottom: 1px; width: 12px; height: 12px; }
```
